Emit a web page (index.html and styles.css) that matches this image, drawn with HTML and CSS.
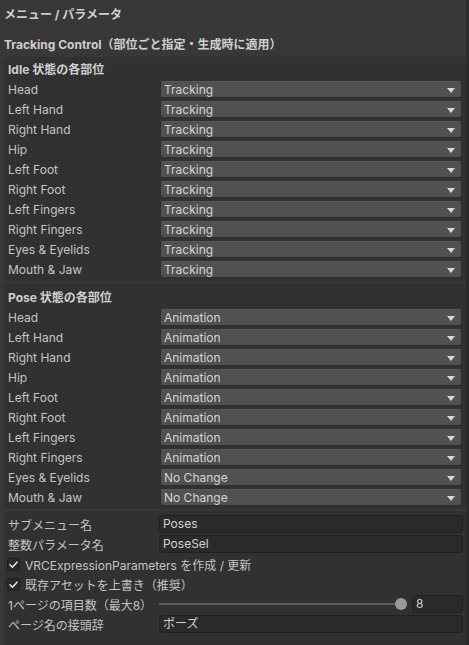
FILE: index.html
```html
<!DOCTYPE html>
<html lang="ja">
<head>
<meta charset="utf-8">
<link rel="stylesheet" href="styles.css">
</head>
<body>
<div class="window">
  <div class="main">
    <div class="title">メニュー / パラメータ</div>
    <div class="subtitle">Tracking Control（部位ごと指定・生成時に適用）</div>

    <div class="box box-first">
      <div class="header">Idle 状態の各部位</div>
      <div class="row"><span class="label">Head</span><div class="dropdown">Tracking</div></div>
      <div class="row"><span class="label">Left Hand</span><div class="dropdown">Tracking</div></div>
      <div class="row"><span class="label">Right Hand</span><div class="dropdown">Tracking</div></div>
      <div class="row"><span class="label">Hip</span><div class="dropdown">Tracking</div></div>
      <div class="row"><span class="label">Left Foot</span><div class="dropdown">Tracking</div></div>
      <div class="row"><span class="label">Right Foot</span><div class="dropdown">Tracking</div></div>
      <div class="row"><span class="label">Left Fingers</span><div class="dropdown">Tracking</div></div>
      <div class="row"><span class="label">Right Fingers</span><div class="dropdown">Tracking</div></div>
      <div class="row"><span class="label">Eyes &amp; Eyelids</span><div class="dropdown">Tracking</div></div>
      <div class="row"><span class="label">Mouth &amp; Jaw</span><div class="dropdown">Tracking</div></div>
    </div>

    <div class="box box-second">
      <div class="header">Pose 状態の各部位</div>
      <div class="row"><span class="label">Head</span><div class="dropdown">Animation</div></div>
      <div class="row"><span class="label">Left Hand</span><div class="dropdown">Animation</div></div>
      <div class="row"><span class="label">Right Hand</span><div class="dropdown">Animation</div></div>
      <div class="row"><span class="label">Hip</span><div class="dropdown">Animation</div></div>
      <div class="row"><span class="label">Left Foot</span><div class="dropdown">Animation</div></div>
      <div class="row"><span class="label">Right Foot</span><div class="dropdown">Animation</div></div>
      <div class="row"><span class="label">Left Fingers</span><div class="dropdown">Animation</div></div>
      <div class="row"><span class="label">Right Fingers</span><div class="dropdown">Animation</div></div>
      <div class="row"><span class="label">Eyes &amp; Eyelids</span><div class="dropdown">No Change</div></div>
      <div class="row"><span class="label">Mouth &amp; Jaw</span><div class="dropdown">No Change</div></div>
    </div>

    <div class="box box-third">
      <div class="row"><span class="label">サブメニュー名</span><div class="textfield">Poses</div></div>
      <div class="row"><span class="label">整数パラメータ名</span><div class="textfield">PoseSel</div></div>
      <div class="check-row">
        <span class="checkbox"><svg viewBox="0 0 13 13" width="13" height="13"><path d="M3 6.8 L5.4 9.2 L10 4.2" fill="none" stroke="#e4e4e4" stroke-width="1.6" stroke-linecap="round" stroke-linejoin="round"/></svg></span>
        <span class="check-label">VRCExpressionParameters を作成 / 更新</span>
      </div>
      <div class="check-row">
        <span class="checkbox"><svg viewBox="0 0 13 13" width="13" height="13"><path d="M3 6.8 L5.4 9.2 L10 4.2" fill="none" stroke="#e4e4e4" stroke-width="1.6" stroke-linecap="round" stroke-linejoin="round"/></svg></span>
        <span class="check-label">既存アセットを上書き（推奨）</span>
      </div>
      <div class="row"><span class="label">1ページの項目数（最大8）</span>
        <div class="slider-wrap">
          <div class="slider"><div class="track"></div><div class="thumb"></div></div>
          <div class="textfield number">8</div>
        </div>
      </div>
      <div class="row"><span class="label">ページ名の接頭辞</span><div class="textfield">ポーズ</div></div>
    </div>
  </div>
  <div class="edge"></div>
</div>
</body>
</html>
```

FILE: styles.css
```css
html, body {
  margin: 0;
  padding: 0;
  background: #383838;
  height: 100%;
  overflow: hidden;
}

body {
  font-family: Inter, "Noto Sans CJK JP", "Noto Sans", sans-serif;
  font-size: 12px;
  color: #c8c8c8;
}

.window {
  display: flex;
  width: 469px;
  height: 645px;
}

.main {
  width: 466px;
  display: flex;
  flex-direction: column;
}

.edge {
  width: 3px;
  background: #2b2b2b;
}

.title {
  height: 20px;
  line-height: 20px;
  margin-top: 5px;
  padding-left: 4px;
  font-weight: 700;
  color: #cfcfcf;
}

.subtitle {
  height: 20px;
  line-height: 20px;
  margin-top: 10px;
  padding-left: 4px;
  font-weight: 700;
  color: #cfcfcf;
}

.box {
  margin-left: 4px;
  background: #313131;
  border-radius: 3px;
  padding: 3px 4px 2px 4px;
}

.box-first {
  margin-top: 2px;
}

.box-second {
  margin-top: 3px;
  padding-top: 4px;
}

.box-third {
  margin-top: 2px;
  padding-top: 3px;
  flex: 1;
  border-radius: 3px 3px 0 0;
}

.header {
  height: 19px;
  line-height: 19px;
  font-weight: 700;
  color: #cfcfcf;
}

.row {
  display: grid;
  grid-template-columns: 152px 1fr;
  align-items: center;
  height: 20px;
}

.label {
  white-space: nowrap;
  color: #c4c4c4;
}

.dropdown {
  position: relative;
  height: 17px;
  line-height: 16px;
  box-sizing: border-box;
  background: #515151;
  border: 1px solid #2f2f2f;
  border-top-color: #585858;
  border-radius: 3px;
  padding-left: 3px;
  color: #d4d4d4;
}

.dropdown::after {
  content: "";
  position: absolute;
  right: 6px;
  top: 6px;
  border-left: 4px solid transparent;
  border-right: 4px solid transparent;
  border-top: 5px solid #d8d8d8;
}

.textfield {
  height: 18px;
  line-height: 16px;
  box-sizing: border-box;
  background: #2a2a2a;
  border: 1px solid #212121;
  border-radius: 3px;
  padding-left: 3px;
  margin-left: -1px;
  margin-right: -1px;
  color: #d2d2d2;
}

.check-row {
  display: flex;
  align-items: center;
  height: 20px;
}

.checkbox {
  width: 13px;
  height: 13px;
  box-sizing: border-box;
  background: #2a2a2a;
  border: 1px solid #1f1f1f;
  border-radius: 2px;
  margin-left: -1px;
  display: flex;
  align-items: center;
  justify-content: center;
}

.checkbox svg {
  display: block;
  flex: none;
}

.check-label {
  margin-left: 5px;
  color: #c4c4c4;
  white-space: nowrap;
}

.slider-wrap {
  display: flex;
  align-items: center;
  gap: 5px;
}

.slider {
  position: relative;
  flex: 1;
  height: 12px;
  margin-left: -1px;
}

.track {
  position: absolute;
  left: 0;
  right: 2px;
  top: 5px;
  height: 2px;
  background: #5e5e5e;
}

.thumb {
  position: absolute;
  right: 0;
  top: 0;
  width: 12px;
  height: 12px;
  border-radius: 50%;
  background: #999999;
}

.textfield.number {
  width: 51px;
  margin-left: 0;
}
```
